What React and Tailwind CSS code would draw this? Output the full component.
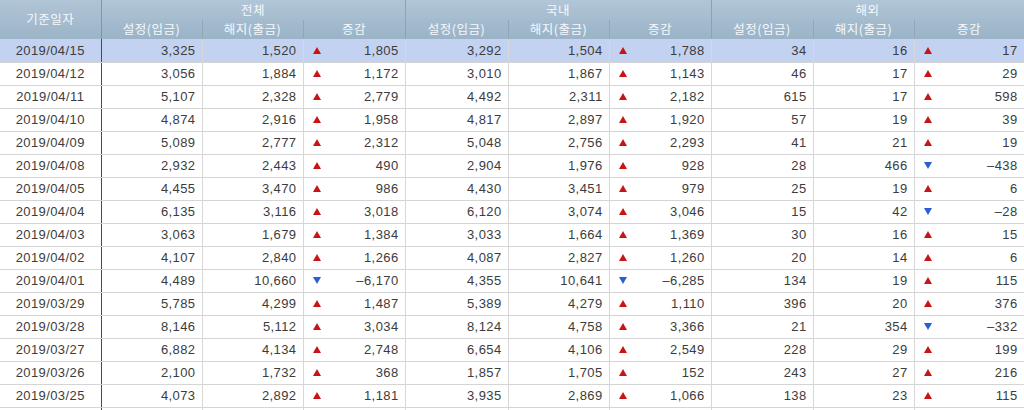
import React from "react";

const rows = [
  ["2019/04/15", "3,325", "1,520", "u", "1,805", "3,292", "1,504", "u", "1,788", "34", "16", "u", "17"],
  ["2019/04/12", "3,056", "1,884", "u", "1,172", "3,010", "1,867", "u", "1,143", "46", "17", "u", "29"],
  ["2019/04/11", "5,107", "2,328", "u", "2,779", "4,492", "2,311", "u", "2,182", "615", "17", "u", "598"],
  ["2019/04/10", "4,874", "2,916", "u", "1,958", "4,817", "2,897", "u", "1,920", "57", "19", "u", "39"],
  ["2019/04/09", "5,089", "2,777", "u", "2,312", "5,048", "2,756", "u", "2,293", "41", "21", "u", "19"],
  ["2019/04/08", "2,932", "2,443", "u", "490", "2,904", "1,976", "u", "928", "28", "466", "d", "–438"],
  ["2019/04/05", "4,455", "3,470", "u", "986", "4,430", "3,451", "u", "979", "25", "19", "u", "6"],
  ["2019/04/04", "6,135", "3,116", "u", "3,018", "6,120", "3,074", "u", "3,046", "15", "42", "d", "–28"],
  ["2019/04/03", "3,063", "1,679", "u", "1,384", "3,033", "1,664", "u", "1,369", "30", "16", "u", "15"],
  ["2019/04/02", "4,107", "2,840", "u", "1,266", "4,087", "2,827", "u", "1,260", "20", "14", "u", "6"],
  ["2019/04/01", "4,489", "10,660", "d", "–6,170", "4,355", "10,641", "d", "–6,285", "134", "19", "u", "115"],
  ["2019/03/29", "5,785", "4,299", "u", "1,487", "5,389", "4,279", "u", "1,110", "396", "20", "u", "376"],
  ["2019/03/28", "8,146", "5,112", "u", "3,034", "8,124", "4,758", "u", "3,366", "21", "354", "d", "–332"],
  ["2019/03/27", "6,882", "4,134", "u", "2,748", "6,654", "4,106", "u", "2,549", "228", "29", "u", "199"],
  ["2019/03/26", "2,100", "1,732", "u", "368", "1,857", "1,705", "u", "152", "243", "27", "u", "216"],
  ["2019/03/25", "4,073", "2,892", "u", "1,181", "3,935", "2,869", "u", "1,066", "138", "23", "u", "115"],
];

function Tri({ dir }) {
  if (dir === "u") {
    return (
      <svg width="8" height="7" viewBox="0 0 8 7" className="block">
        <polygon points="4,0 8,7 0,7" fill="#c81414" />
      </svg>
    );
  }
  return (
    <svg width="8" height="7" viewBox="0 0 8 7" className="block">
      <polygon points="0,0 8,0 4,7" fill="#2a5ed6" />
    </svg>
  );
}

const hd = "text-[#f6f8fb] font-normal text-[12.5px] tracking-[0.5px] text-center align-middle";
const kr = { fontFamily: '"Noto Sans CJK KR", "Noto Sans", sans-serif' };
const txt = "text-[13px] tracking-[0.4px] text-[#3c3c3c] leading-none";

function Cell({ v }) {
  return (
    <td className={`h-[23px] p-0 pr-[6px] text-right border-b border-r border-b-[#d5d5d5] border-r-[#d8d8d8] ${txt}`}>
      {v}
    </td>
  );
}

function Diff({ dir, v }) {
  return (
    <td className={`h-[23px] p-0 border-b border-r border-b-[#d5d5d5] border-r-[#d8d8d8] ${txt}`}>
      <div className="flex items-center justify-between pl-[9px] pr-[6px]">
        <Tri dir={dir} />
        <span>{v}</span>
      </div>
    </td>
  );
}

export default function App() {
  const groups = ["전체", "국내", "해외"];
  return (
    <div
      className="w-[1024px] h-[410px] overflow-hidden bg-white"
      style={{ fontFamily: '"Liberation Sans", Arial, sans-serif' }}
    >
      <table className="table-fixed border-collapse w-[1024px]">
        <colgroup>
          <col className="w-[101px]" />
          <col className="w-[101px]" />
          <col className="w-[101px]" />
          <col className="w-[102px]" />
          <col className="w-[103px]" />
          <col className="w-[101px]" />
          <col className="w-[102px]" />
          <col className="w-[102px]" />
          <col className="w-[101px]" />
          <col className="w-[110px]" />
        </colgroup>
        <thead style={kr}>
          <tr className="h-[20px] bg-gradient-to-b from-[#b1c6d7] to-[#a5bccf]">
            <th
              rowSpan={2}
              className={`${hd} p-0 border-r border-r-[#7f97ab] bg-gradient-to-b from-[#b0c5d6] to-[#9cb4c8]`}
            >
              기준일자
            </th>
            {groups.map((g) => (
              <th
                key={g}
                colSpan={3}
                className={`${hd} p-0 border-r border-r-[#8aa3b8]`}
              >
                {g}
              </th>
            ))}
          </tr>
          <tr className="h-[19px] bg-gradient-to-b from-[#a5bccf] to-[#9bb3c7]">
            {groups.map((g) => (
              <React.Fragment key={g}>
                <th className={`${hd} p-0 border-r border-r-[#8fa7bb]`}>설정(입금)</th>
                <th className={`${hd} p-0 border-r border-r-[#8fa7bb]`}>해지(출금)</th>
                <th className={`${hd} p-0 border-r border-r-[#8aa3b8]`}>증감</th>
              </React.Fragment>
            ))}
          </tr>
        </thead>
        <tbody>
          {rows.map((r, i) => (
            <tr key={r[0]} className={i === 0 ? "bg-[#c3d2f1]" : "bg-white"}>
              <td className={`h-[23px] p-0 text-center border-b border-r border-b-[#d5d5d5] border-r-[#4a4a4a] ${txt}`}>
                {r[0]}
              </td>
              <Cell v={r[1]} />
              <Cell v={r[2]} />
              <Diff dir={r[3]} v={r[4]} />
              <Cell v={r[5]} />
              <Cell v={r[6]} />
              <Diff dir={r[7]} v={r[8]} />
              <Cell v={r[9]} />
              <Cell v={r[10]} />
              <Diff dir={r[11]} v={r[12]} />
            </tr>
          ))}
          <tr className="bg-white">
            <td className="h-[23px] p-0 border-r border-r-[#4a4a4a]"></td>
            {Array.from({ length: 9 }).map((_, k) => (
              <td key={k} className="h-[23px] p-0 border-r border-r-[#d8d8d8]"></td>
            ))}
          </tr>
        </tbody>
      </table>
    </div>
  );
}
